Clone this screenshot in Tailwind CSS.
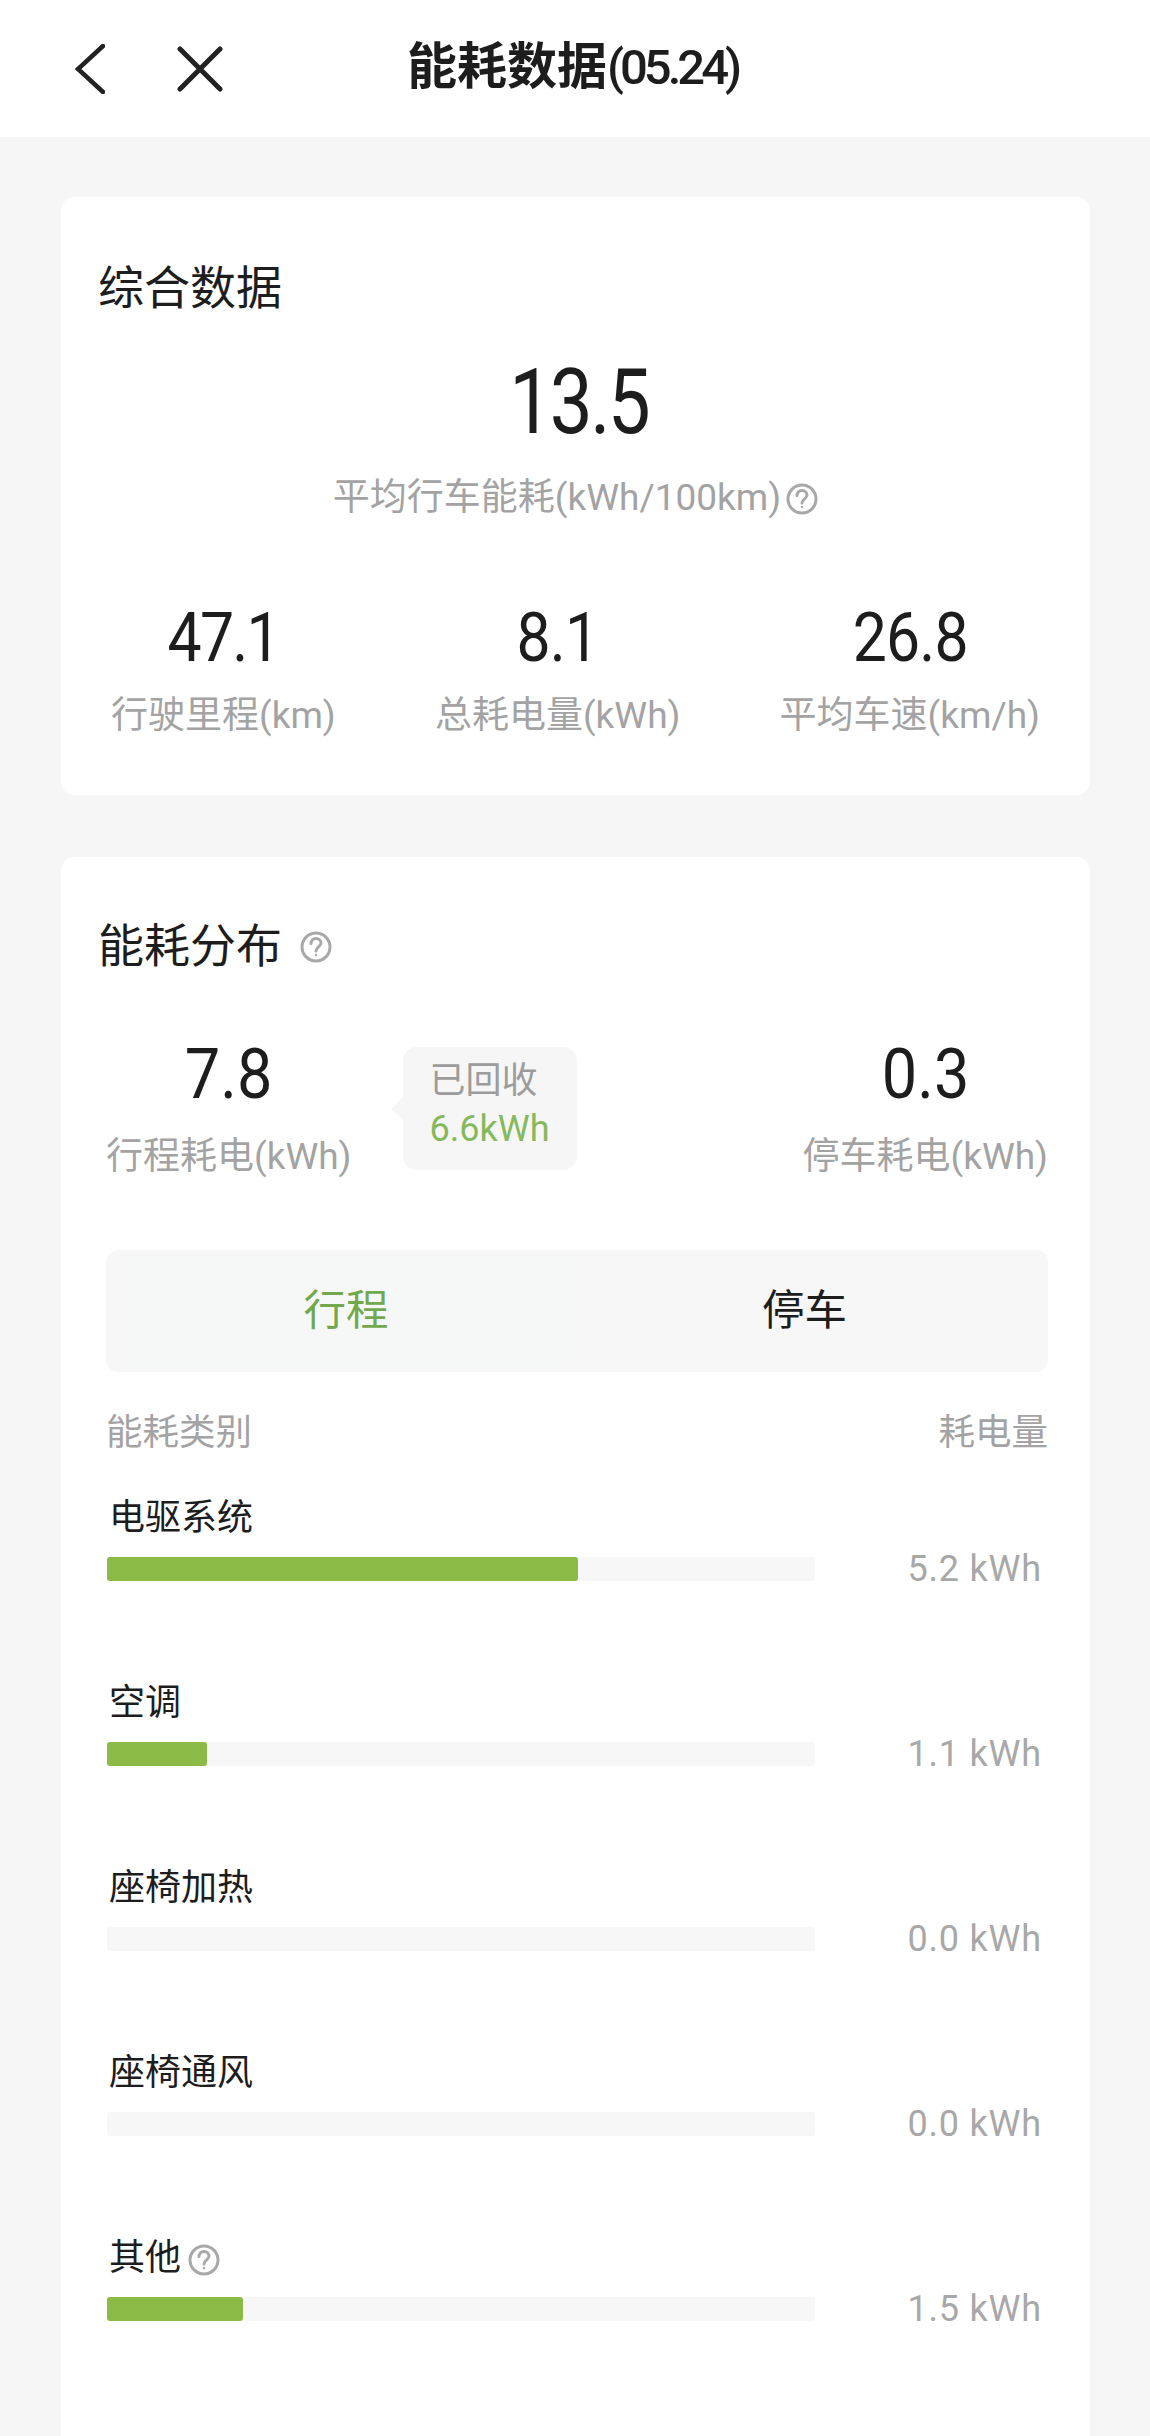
<!DOCTYPE html>
<html lang="zh-CN">
<head>
    <meta charset="UTF-8">
    <meta name="viewport" content="width=device-width, initial-scale=1.0">
    <script src="https://cdn.jsdelivr.net/npm/@tailwindcss/browser@4"></script>
    <title>能耗数据</title>
</head>
<body>
    <div class="w-[1150px] h-[2436px] overflow-hidden bg-[#f6f6f6] text-[#1d1d1d] font-[Roboto,'Noto_Sans_CJK_SC',sans-serif]">
        <!-- 顶部栏 -->
        <header class="h-[137px] bg-white flex items-center pl-[75px]">
            <svg class="w-[30px] h-[50px]" viewBox="0 0 30 50" fill="none" stroke="#222" stroke-width="4.5" stroke-linecap="round" stroke-linejoin="miter"><path d="M28 2 3 25l25 23"/></svg>
            <svg class="ml-[72px] w-[46px] h-[46px]" viewBox="0 0 46 46" fill="none" stroke="#222" stroke-width="5" stroke-linecap="round"><path d="M3 3l40 40M43 3 3 43"/></svg>
            <h1 class="ml-[184px] text-[50px] leading-[56px] font-semibold whitespace-nowrap -mt-[2px]">能耗数据<span class="tracking-[-4px] text-[49px] font-medium">(05.24)</span></h1>
        </header>

        <!-- 综合数据 -->
        <section class="mt-[60px] mx-[61px] w-[1029px] h-[598px] bg-white rounded-[14px] pt-[63px]">
            <h2 class="pl-[37px] text-[46px] leading-[56px]">综合数据</h2>
            <div class="mt-[42px] text-center pl-[6px]">
                <div class="text-[90px] leading-[90px] inline-block scale-x-[.85] tracking-[-3px]">13.5</div>
            </div>
            <div class="mt-[28px] flex items-center justify-center gap-[5px] text-[37px] leading-[44px] text-[#a3a3a3]">
                <span>平均行车能耗(kWh/100km)</span>
                <svg class="w-[32px] h-[32px] mt-[2px]" viewBox="0 0 32 32" fill="none" stroke="#a8a8a8" stroke-width="3"><circle cx="16" cy="16" r="14"/><path d="M11 12.5c0-3 2.300-5 5-5s5 2 5 4.600c0 3.600-5 3.900-5 7.900" stroke-linecap="round"/><circle cx="16" cy="24" r="1.200" fill="#a8a8a8" stroke="none"/></svg>
            </div>
            <div class="mt-[84px] flex justify-between px-[50px]">
                <div class="text-center">
                    <div class="text-[69px] leading-[68px] inline-block scale-x-[.88] tracking-[-2px]">47.1</div>
                    <div class="mt-[22px] text-[37px] leading-[44px] text-[#a3a3a3]">行驶里程(km)</div>
                </div>
                <div class="text-center">
                    <div class="text-[69px] leading-[68px] inline-block scale-x-[.88] tracking-[-1px]">8.1</div>
                    <div class="mt-[22px] text-[37px] leading-[44px] text-[#a3a3a3]">总耗电量(kWh)</div>
                </div>
                <div class="text-center">
                    <div class="text-[69px] leading-[68px] inline-block scale-x-[.88] tracking-[-1px]">26.8</div>
                    <div class="mt-[22px] text-[37px] leading-[44px] text-[#a3a3a3]">平均车速(km/h)</div>
                </div>
            </div>
        </section>

        <!-- 能耗分布 -->
        <section class="mt-[62px] mx-[61px] w-[1029px] h-[1600px] bg-white rounded-[14px] pt-[61px]">
            <h2 class="pl-[37px] flex items-center gap-[18px] text-[46px] leading-[56px]">
                能耗分布
                <svg class="w-[32px] h-[32px] mt-[2px]" viewBox="0 0 32 32" fill="none" stroke="#a8a8a8" stroke-width="3"><circle cx="16" cy="16" r="14"/><path d="M11 12.5c0-3 2.300-5 5-5s5 2 5 4.600c0 3.600-5 3.900-5 7.900" stroke-linecap="round"/><circle cx="16" cy="24" r="1.200" fill="#a8a8a8" stroke="none"/></svg>
            </h2>

            <div class="mt-[66px] pl-[45px] pr-[42px] flex items-start">
                <div class="text-center">
                    <div class="text-[70px] leading-[68px] inline-block scale-x-[.9]">7.8</div>
                    <div class="mt-[27px] text-[37px] leading-[44px] text-[#a3a3a3] whitespace-nowrap">行程耗电(kWh)</div>
                </div>
                <div class="relative ml-[51px] mt-[7px] w-[174px] h-[123px] bg-[#f6f6f6] rounded-[14px] pt-[12px] pl-[27px] text-[36px] leading-[44px]">
                    <div class="absolute -left-[8px] top-[53px] w-[18px] h-[18px] bg-[#f6f6f6] rotate-45"></div>
                    <div class="relative text-[#9c9c9c]">已回收</div>
                    <div class="relative mt-[4px] text-[#86b95c]">6.6kWh</div>
                </div>
                <div class="ml-auto text-center">
                    <div class="text-[70px] leading-[68px] inline-block scale-x-[.9]">0.3</div>
                    <div class="mt-[27px] text-[37px] leading-[44px] text-[#a3a3a3] whitespace-nowrap">停车耗电(kWh)</div>
                </div>
            </div>

            <div class="mt-[71px] ml-[45px] mr-[42px] h-[122px] bg-[#f7f7f7] rounded-[12px] flex text-[42.5px]">
                <div class="w-[450px] ml-[15px] my-[8px] bg-[#f6f8f8] flex items-center justify-center text-[#71a94c]">行程</div>
                <div class="flex-1 flex items-center justify-center pr-[10px]">停车</div>
            </div>

            <div class="mt-[39px] ml-[45px] mr-[42px] flex justify-between text-[36.5px] leading-[44px] text-[#a3a3a3]">
                <span>能耗类别</span>
                <span>耗电量</span>
            </div>

            <div class="mt-[41px] ml-[46px] mr-[48px]">
                <div class="pl-[2px] text-[36px] leading-[44px]">电驱系统</div>
                <div class="mt-[17px] mb-[100px] h-[24px] flex items-center">
                    <div class="w-[708px] h-[24px] bg-[#f7f7f7] rounded-[3px]"><div class="h-full w-[471px] bg-[#8bba46] rounded-[3px]"></div></div>
                    <div class="ml-auto text-[36px] leading-[24px] text-[#a8a8a8] tracking-[.8px]">5.2 kWh</div>
                </div>

                <div class="pl-[2px] text-[36px] leading-[44px]">空调</div>
                <div class="mt-[17px] mb-[100px] h-[24px] flex items-center">
                    <div class="w-[708px] h-[24px] bg-[#f7f7f7] rounded-[3px]"><div class="h-full w-[100px] bg-[#8bba46] rounded-[3px]"></div></div>
                    <div class="ml-auto text-[36px] leading-[24px] text-[#a8a8a8] tracking-[.8px]">1.1 kWh</div>
                </div>

                <div class="pl-[2px] text-[36px] leading-[44px]">座椅加热</div>
                <div class="mt-[17px] mb-[100px] h-[24px] flex items-center">
                    <div class="w-[708px] h-[24px] bg-[#f7f7f7] rounded-[3px]"></div>
                    <div class="ml-auto text-[36px] leading-[24px] text-[#a8a8a8] tracking-[.8px]">0.0 kWh</div>
                </div>

                <div class="pl-[2px] text-[36px] leading-[44px]">座椅通风</div>
                <div class="mt-[17px] mb-[100px] h-[24px] flex items-center">
                    <div class="w-[708px] h-[24px] bg-[#f7f7f7] rounded-[3px]"></div>
                    <div class="ml-auto text-[36px] leading-[24px] text-[#a8a8a8] tracking-[.8px]">0.0 kWh</div>
                </div>

                <div class="pl-[2px] flex items-center gap-[7px] text-[36px] leading-[44px]">
                    其他
                    <svg class="w-[32px] h-[32px] mt-[3px]" viewBox="0 0 32 32" fill="none" stroke="#a8a8a8" stroke-width="3"><circle cx="16" cy="16" r="14"/><path d="M11 12.5c0-3 2.300-5 5-5s5 2 5 4.600c0 3.600-5 3.900-5 7.900" stroke-linecap="round"/><circle cx="16" cy="24" r="1.200" fill="#a8a8a8" stroke="none"/></svg>
                </div>
                <div class="mt-[17px] h-[24px] flex items-center">
                    <div class="w-[708px] h-[24px] bg-[#f7f7f7] rounded-[3px]"><div class="h-full w-[136px] bg-[#8bba46] rounded-[3px]"></div></div>
                    <div class="ml-auto text-[36px] leading-[24px] text-[#a8a8a8] tracking-[.8px]">1.5 kWh</div>
                </div>
            </div>
        </section>
    </div>
</body>
</html>
